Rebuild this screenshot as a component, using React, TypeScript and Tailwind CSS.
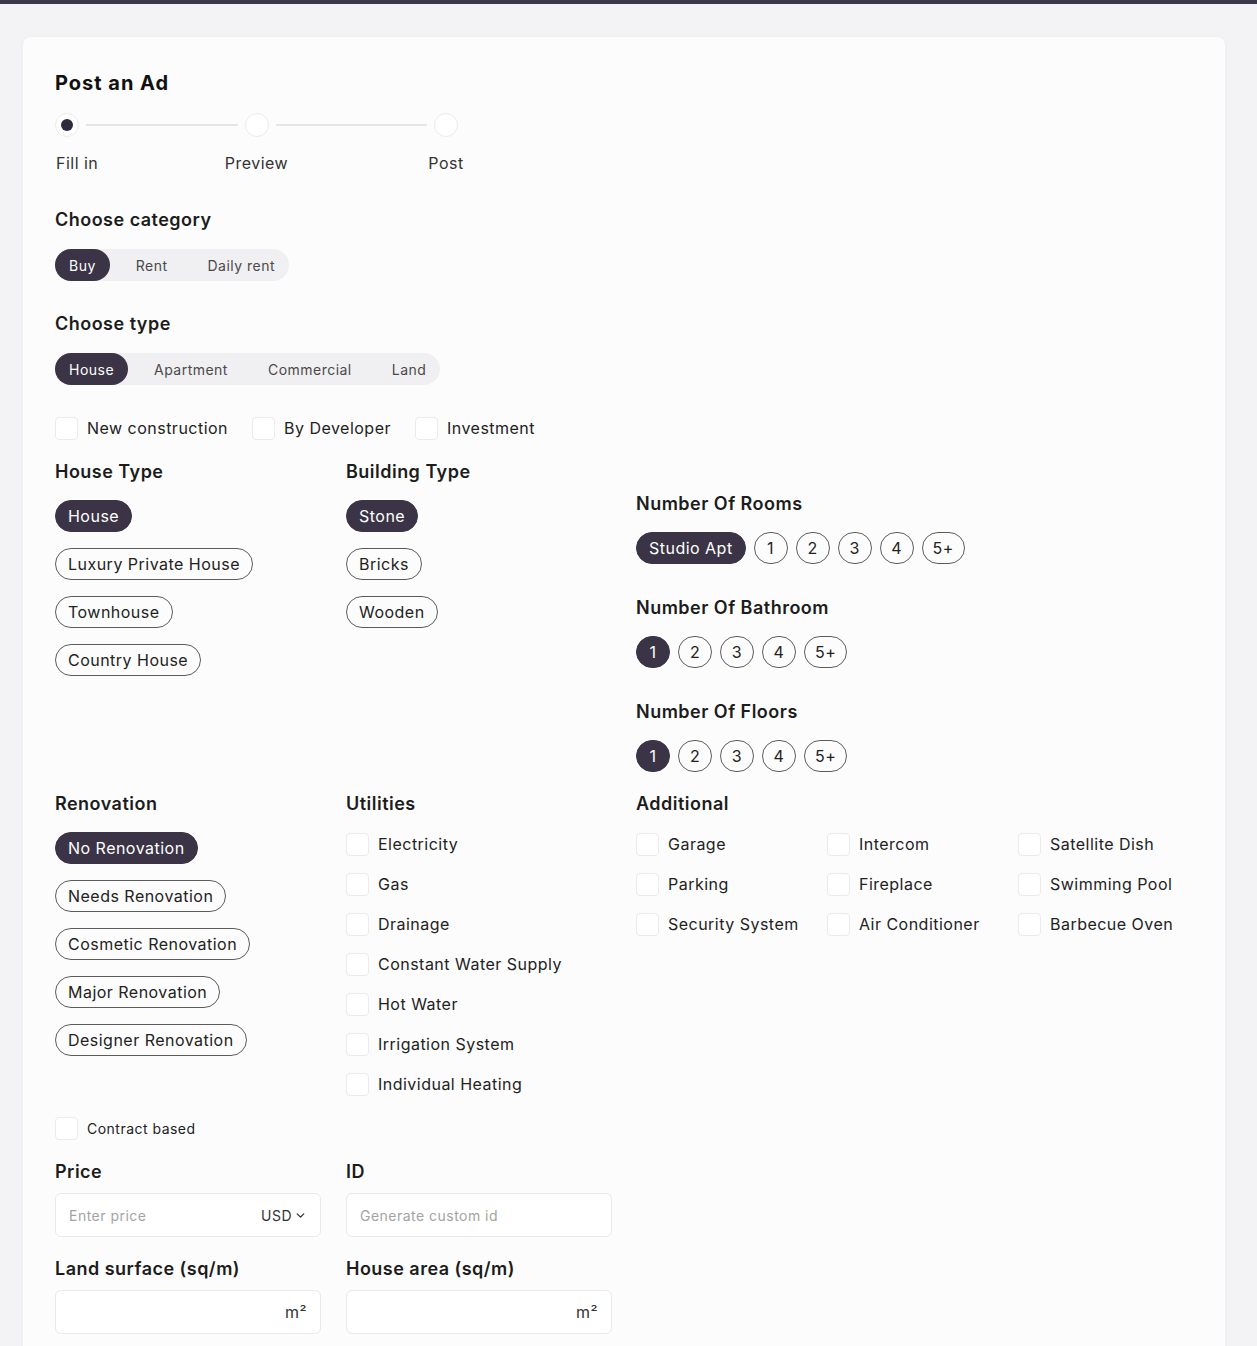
import { ChevronDown } from "lucide-react";

const dark = "bg-[#3a3446] text-white border-[#3a3446]";

function Title({ children }: { children: React.ReactNode }) {
  return <h2 className="text-[18px] leading-7 font-semibold text-[#1c1c1c]">{children}</h2>;
}

function Segmented({ items, active }: { items: string[]; active: number }) {
  return (
    <div className="inline-flex h-8 items-center gap-3 rounded-full bg-[#f0eff2]">
      {items.map((it, i) => (
        <span
          key={it}
          className={`flex h-8 items-center rounded-full px-[14px] text-[14px] ${
            i === active ? "bg-[#3a3446] text-white" : "text-[#4a4a4a]"
          }`}
        >
          {it}
        </span>
      ))}
    </div>
  );
}

function Box() {
  return <span className="h-[23px] w-[23px] shrink-0 rounded-[4px] border border-[#ebebeb] bg-white" />;
}

function Check({ label, small }: { label: string; small?: boolean }) {
  return (
    <label className="flex h-6 items-center gap-[9px] whitespace-nowrap">
      <Box />
      <span className={small ? "text-[14px] text-[#222]" : "text-[16px] text-[#222]"}>{label}</span>
    </label>
  );
}

function Pill({ label, active }: { label: string; active?: boolean }) {
  return (
    <span
      className={`inline-flex h-8 items-center whitespace-nowrap rounded-full border px-3 text-[16px] ${
        active ? dark : "border-[#5c5c5c] text-[#222]"
      }`}
    >
      {label}
    </span>
  );
}

function Round({ label, active }: { label: string; active?: boolean }) {
  return (
    <span
      className={`inline-flex h-8 min-w-[34px] items-center justify-center rounded-full border px-[10px] text-[16px] ${
        active ? dark : "border-[#5c5c5c] text-[#222]"
      }`}
    >
      {label}
    </span>
  );
}

function PillList({ items, active }: { items: string[]; active: number }) {
  return (
    <div className="mt-[14px] flex flex-col items-start gap-4">
      {items.map((it, i) => (
        <Pill key={it} label={it} active={i === active} />
      ))}
    </div>
  );
}

function Counter({ items, active }: { items: string[]; active: number }) {
  return (
    <div className="mt-[14px] flex items-center gap-2">
      {items.map((it, i) =>
        it === "Studio Apt" ? (
          <Pill key={it} label={it} active={i === active} />
        ) : (
          <Round key={it} label={it} active={i === active} />
        )
      )}
    </div>
  );
}

function Stepper() {
  const circle = "h-6 w-6 shrink-0 rounded-full border border-[#ebebeb] bg-white flex items-center justify-center";
  return (
    <div className="w-[403px]">
      <div className="mt-4 flex items-center">
        <span className={circle}>
          <span className="h-3 w-3 rounded-full bg-[#302a3e]" />
        </span>
        <span className="mx-[7px] h-[2px] flex-1 bg-[#e6e6e6]" />
        <span className={circle} />
        <span className="mx-[7px] h-[2px] flex-1 bg-[#e6e6e6]" />
        <span className={circle} />
      </div>
      <div className="mt-[14px] flex justify-between text-[16px] leading-6 text-[#333]">
        <div className="w-6 whitespace-nowrap pl-px">Fill in</div>
        <div className="flex w-6 justify-center whitespace-nowrap">Preview</div>
        <div className="flex w-6 justify-center whitespace-nowrap">Post</div>
      </div>
    </div>
  );
}

function Field({ placeholder, suffix }: { placeholder?: string; suffix: React.ReactNode }) {
  return (
    <div className="mt-[7px] flex h-[44px] w-[266px] items-center justify-between rounded-md border border-[#e9e9e9] bg-white px-[13px]">
      <span className="text-[14px] text-[#a3a3a3]">{placeholder}</span>
      {suffix}
    </div>
  );
}

export default function App() {
  return (
    <div
      className="min-h-screen bg-[#f3f2f5] tracking-[0.03em] text-[#222]"
      style={{ fontFamily: "Inter, 'Noto Sans', sans-serif" }}
    >
      <div className="h-1 bg-[#3d384a]" />
      <div className="ml-[23px] mt-[33px] w-[1202px] rounded-lg bg-[#fcfcfc] px-8 pb-16 pt-8 shadow-[0_0_4px_rgba(0,0,0,0.04)]">
        <h1 className="text-[20px] leading-7 font-bold tracking-[0.05em] text-[#111]">Post an Ad</h1>
        <Stepper />

        <div className="mt-[31px]">
          <Title>Choose category</Title>
          <div className="mt-[15px]">
            <Segmented items={["Buy", "Rent", "Daily rent"]} active={0} />
          </div>
        </div>

        <div className="mt-[29px]">
          <Title>Choose type</Title>
          <div className="mt-[15px]">
            <Segmented items={["House", "Apartment", "Commercial", "Land"]} active={0} />
          </div>
        </div>

        <div className="mt-[31px] flex items-center gap-6">
          <Check label="New construction" />
          <Check label="By Developer" />
          <Check label="Investment" />
        </div>

        <div className="mt-[18px] flex items-start">
          <div className="w-[291px] shrink-0">
            <Title>House Type</Title>
            <PillList items={["House", "Luxury Private House", "Townhouse", "Country House"]} active={0} />
          </div>
          <div className="w-[290px] shrink-0">
            <Title>Building Type</Title>
            <PillList items={["Stone", "Bricks", "Wooden"]} active={0} />
          </div>
          <div className="mt-8">
            <Title>Number Of Rooms</Title>
            <Counter items={["Studio Apt", "1", "2", "3", "4", "5+"]} active={0} />
            <div className="mt-[30px]">
              <Title>Number Of Bathroom</Title>
              <Counter items={["1", "2", "3", "4", "5+"]} active={0} />
            </div>
            <div className="mt-[30px]">
              <Title>Number Of Floors</Title>
              <Counter items={["1", "2", "3", "4", "5+"]} active={0} />
            </div>
          </div>
        </div>

        <div className="mt-[18px] flex items-start">
          <div className="w-[291px] shrink-0">
            <Title>Renovation</Title>
            <PillList
              items={["No Renovation", "Needs Renovation", "Cosmetic Renovation", "Major Renovation", "Designer Renovation"]}
              active={0}
            />
          </div>
          <div className="w-[290px] shrink-0">
            <Title>Utilities</Title>
            <div className="mt-[14px] flex flex-col gap-4">
              {["Electricity", "Gas", "Drainage", "Constant Water Supply", "Hot Water", "Irrigation System", "Individual Heating"].map(
                (u) => (
                  <Check key={u} label={u} />
                )
              )}
            </div>
          </div>
          <div className="min-w-0 flex-1">
            <Title>Additional</Title>
            <div className="mt-[14px] grid grid-cols-[191px_191px_1fr] gap-y-4">
              {[
                "Garage",
                "Intercom",
                "Satellite Dish",
                "Parking",
                "Fireplace",
                "Swimming Pool",
                "Security System",
                "Air Conditioner",
                "Barbecue Oven",
              ].map((a) => (
                <Check key={a} label={a} />
              ))}
            </div>
          </div>
        </div>

        <div className="mt-5">
          <Check label="Contract based" small />
        </div>

        <div className="mt-[18px] flex">
          <div className="w-[291px] shrink-0">
            <Title>Price</Title>
            <Field
              placeholder="Enter price"
              suffix={
                <span className="flex items-center gap-[2px] text-[14px] text-[#333]">
                  USD
                  <ChevronDown size={13} strokeWidth={2.5} />
                </span>
              }
            />
          </div>
          <div className="w-[290px] shrink-0">
            <Title>ID</Title>
            <Field placeholder="Generate custom id" suffix={null} />
          </div>
        </div>

        <div className="mt-[18px] flex">
          <div className="w-[291px] shrink-0">
            <Title>Land surface (sq/m)</Title>
            <Field suffix={<span className="text-[16px] text-[#333]">m²</span>} />
          </div>
          <div className="w-[290px] shrink-0">
            <Title>House area (sq/m)</Title>
            <Field suffix={<span className="text-[16px] text-[#333]">m²</span>} />
          </div>
        </div>
      </div>
    </div>
  );
}
